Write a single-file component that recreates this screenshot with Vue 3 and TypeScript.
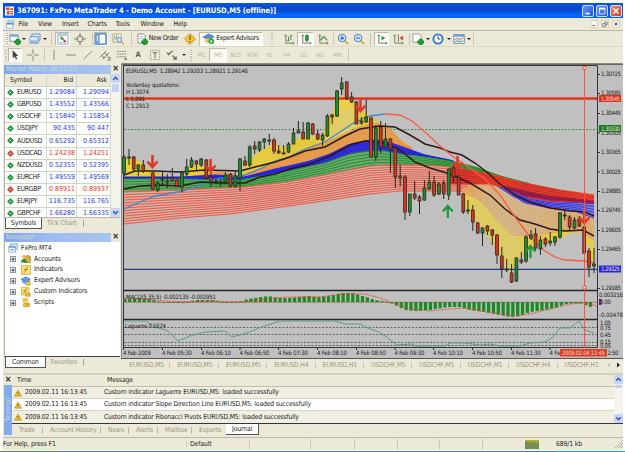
<script setup lang="ts">
type Pt = [number, number]
type Candle = [number, number, number, number, number, 'g' | 'r']

const menus = [['File', 19.5], ['View', 24], ['Insert', 25.5], ['Charts', 28], ['Tools', 25], ['Window', 33], ['Help', 20]] as [string, number][]

const plus = '<path d="M8 6.5h3v2h2v2.500h-2v2H8v-2H6V8.500h2z" fill="#18a028" stroke="#0b6a18" stroke-width=".5"/>'
const glass = '<path d="M8 8l4 4" stroke="#d9a441" stroke-width="2"/><circle cx="5.500" cy="5.500" r="4" fill="#cfe6fb" stroke="#5b8fcb" stroke-width="1.200"/>'
const axes = '<path d="M3 2v9h9M1.500 3.500L3 2l1.500 1.500M10.500 9.500L12 11l-1.500 1.500" fill="none" stroke="#77756a" stroke-width="1"/>'
const icons: Record<string, string> = {
  add: '<path d="M1 2h9v7H1z" fill="#f5f9ff" stroke="#6f93b8"/><path d="M1 2h9v2H1z" fill="#79a7d9"/>' + plus,
  profiles: '<path d="M3 1h9v7H3z" fill="#cfe1f7" stroke="#6f93c8"/><path d="M1 4h9v7H1z" fill="#dfebfa" stroke="#6f93c8"/><path d="M2 8h7v3H2z" fill="#90b3e0"/>',
  market: '<path d="M1 1h11v11H1z" fill="#fff" stroke="#7ea2c9"/><path d="M2 2.500h9M3 10h4" stroke="#9cb4d2"/><path d="M4 4l3 2-2 1z" fill="#1c9a34" stroke="#1c9a34"/><path d="M7 7l3 2-2 1z" fill="#d83a22" stroke="#d83a22"/>',
  target: '<circle cx="6.500" cy="6.500" r="3.500" fill="none" stroke="#77756a"/><path d="M6.500 0v5M6.500 8v5M0 6.500h5M8 6.500h5" stroke="#77756a"/>',
  navi: '<path d="M1 1h11v11H1z" fill="#fff" stroke="#3d79c9" stroke-width="1.500"/><path d="M1 1h4v11H1z" fill="#6aa2e3"/><path d="M2.500 3v6" stroke="#fff"/>',
  tester: '<path d="M1 1h9v9H1z" fill="#f8f4dc" stroke="#b9ab78"/><path d="M3 3v5M5 2v5M7 4v4" stroke="#7a97c9"/><circle cx="8" cy="7.500" r="2.500" fill="#cfe6fb" stroke="#5b8fcb"/><path d="M10 9.500l3 3" stroke="#d9a441" stroke-width="1.500"/>',
  order: '<path d="M2 1h6l2 2v8H2z" fill="#fff" stroke="#8c8c80"/><path d="M3.500 4h4M3.500 6h4" stroke="#a5b8c9"/>' + plus,
  diamond: '<path d="M6.500 .7l5.800 5.800-5.800 5.800L.7 6.500z" fill="#f9c735" stroke="#cc8a14"/><path d="M6.500 3v4.500M6.500 8.700v1.300" stroke="#7c4b00" stroke-width="1.300"/>',
  expert: '<path d="M0 4.500l6-3.500 6 3-5 3z" fill="#4c8fe0" stroke="#2b66b5" stroke-width=".7"/><path d="M3 6v3.500l5 1V6z" fill="#f3cf58" stroke="#b88c1e" stroke-width=".6"/><circle cx="9" cy="9" r="3" fill="#1ca532"/><path d="M8 7.500l3 1.500-3 1.500z" fill="#fff"/>',
  advisor: '<path d="M0 4.500l6-3.500 6 3-5 3z" fill="#5f9fe8" stroke="#2b66b5" stroke-width=".7"/><path d="M2 5.500v3l5 2 4-2V5L7 7.500z" fill="#6ea9ea" stroke="#3d7cc6" stroke-width=".6"/><path d="M7 7.500h5v4.500H7z" fill="#f7c944" stroke="#b88c1e" stroke-width=".7"/>',
  bars: axes + '<path d="M6 9V4M4.500 8H6M8.500 8V2M8.500 3H10" fill="none" stroke="#219034"/>',
  candle: axes + '<path d="M7.500 1v9" stroke="#126a20"/><path d="M6 3h3v5H6z" fill="#25a53b" stroke="#126a20" stroke-width=".7"/>',
  line: axes + '<path d="M4 8c3-6 4-4 7 0" fill="none" stroke="#219034" stroke-width="1.200"/>',
  zoomin: glass + '<path d="M3.500 5.500h4M5.500 3.500v4" stroke="#2167bd" stroke-width="1.200"/>',
  zoomout: glass + '<path d="M3.500 5.500h4" stroke="#2167bd" stroke-width="1.200"/>',
  scroll: axes + '<path d="M6 3v5l4-2.500z" fill="#1fa035"/>',
  shift: axes + '<path d="M7 1.500v8" stroke="#77756a"/><path d="M12 3v5L8 5.500z" fill="#cf4328"/>',
  indic: '<path d="M1 1h7l2 2v7H1z" fill="#fff" stroke="#8c9c9c"/>' + plus,
  clock: '<circle cx="6.500" cy="6.500" r="5" fill="#f4faff" stroke="#2f72cf" stroke-width="2"/><path d="M6.500 3.500v3H9" fill="none" stroke="#345"/>',
  template: '<path d="M.7 1.700h11.600v9.600H.7z" fill="#eaf2fb" stroke="#6f93b8"/><path d="M1 2h11v2H1z" fill="#6ca0de"/><path d="M2 7l3-1 3 1 3-2" fill="none" stroke="#c65b2a"/><path d="M2 9.500l3-1 3 1 3-1" fill="none" stroke="#3b9a46"/>',
  cursor: '<path d="M4 1v9l2-2 1.500 3.500 1.500-.6L7.500 7.500H10z" fill="#45443e"/>',
  cross: '<path d="M6.500 0v5.500M6.500 7.500V13M0 6.500h5.500M7.500 6.500H13" stroke="#858276"/>',
  vline: '<path d="M6.500 1v11" stroke="#858276"/>',
  hline: '<path d="M1 6.500h11" stroke="#858276"/>',
  trend: '<path d="M2 11l9-9" stroke="#858276"/>',
  channel: '<path d="M1 9l7-7M4 11l7-7M3 7l3 3M6 4l3 3" stroke="#66645a"/><path d="M9 9h3v3H9" fill="none" stroke="#66645a"/>',
  fibo: '<path d="M1 2.500h11M1 5.500h11M1 8.500h11" stroke="#858276" stroke-dasharray="2 .7"/><path d="M9 11h3" stroke="#858276" stroke-width="2"/>',
  label: '<path d="M1.500 1.500h10v10h-10z" fill="none" stroke="#858276" stroke-dasharray="1 1"/><path d="M4 4h5M6.500 4v6" stroke="#66645a"/>',
  arrows: '<path d="M1 4l2 2 4-4" fill="none" stroke="#66645a" stroke-width="1.300"/><path d="M7 7l4 4M11 8v3H8" fill="none" stroke="#66645a" stroke-width="1.300"/>',
  accounts: '<path d="M4 3h8v8H4z" fill="#e3b640" stroke="#96761c"/><circle cx="4" cy="3.500" r="2.500" fill="#efb75d"/><path d="M0 11c0-6 8-6 8 0z" fill="#26913a"/><circle cx="9" cy="3" r="2" fill="#d99a3c"/>',
  findic: '<path d="M.7.7h11.600v11.600H.7z" fill="#ffe47a" stroke="#d2a72e"/><path d="M9 3c-2-1-2 1-3 4s-2 3-3 2M4 6h5" fill="none" stroke="#9b6b12"/>',
  custom: '<path d="M.7.7h9.600v9.600H.7z" fill="#ffe47a" stroke="#d2a72e"/><path d="M8 2c-3 0-2 6-5 6M3 5h4" fill="none" stroke="#9b6b12"/><path d="M6 8h6v4H6z" fill="#f2b63c" stroke="#b57f1b" stroke-width=".7"/>',
  script: '<path d="M2 1h7v6H4z" fill="#ffe47a" stroke="#d2a72e"/><path d="M4 7h7v4H3z" fill="#f7ca4b" stroke="#c49527"/><path d="M4 3h3M6 9h4" stroke="#a87b1b"/>',
}

interface Tool { k?: string; w: number; t?: 'grip' | 'caret' | 'sep'; on?: boolean; text?: string; m?: string }
const bar1: Tool[] = [
  { t: 'grip', w: 5 }, { k: 'add', w: 11 }, { t: 'caret', w: 8 }, { k: 'profiles', w: 13 }, { t: 'caret', w: 7 }, { t: 'sep', w: 7 },
  { k: 'market', w: 15, on: true }, { k: 'target', w: 20 }, { t: 'sep', w: 4 }, { k: 'navi', w: 14, on: true }, { k: 'tester', w: 20 }, { t: 'sep', w: 6 },
  { k: 'order', w: 46, text: 'New Order' }, { k: 'diamond', w: 19 }, { k: 'expert', w: 64, on: true, text: 'Expert Advisors' },
  { t: 'grip', w: 17 }, { k: 'bars', w: 17 }, { k: 'candle', w: 17, on: true }, { k: 'line', w: 18 }, { t: 'sep', w: 3 },
  { k: 'zoomin', w: 16 }, { k: 'zoomout', w: 16 }, { t: 'sep', w: 7 }, { k: 'scroll', w: 15, on: true }, { k: 'shift', w: 18 }, { t: 'sep', w: 4 },
  { k: 'indic', w: 13 }, { t: 'caret', w: 7 }, { k: 'clock', w: 14 }, { t: 'caret', w: 7 }, { k: 'template', w: 14 }, { t: 'caret', w: 6 }, { t: 'sep', w: 3 },
]
const bar2: Tool[] = [
  { t: 'grip', w: 4 }, { k: 'cursor', w: 14, on: true }, { k: 'cross', w: 21 }, { t: 'sep', w: 2 }, { k: 'vline', w: 17 }, { k: 'hline', w: 17 },
  { k: 'trend', w: 17 }, { k: 'channel', w: 17 }, { k: 'fibo', w: 17 }, { m: 'A', w: 16 }, { k: 'label', w: 17 }, { k: 'arrows', w: 17 }, { t: 'caret', w: 7 },
  { t: 'grip', w: 7 }, { m: 'M1', w: 15 }, { m: 'M5', w: 18, on: true }, { m: 'M15', w: 17 }, { m: 'M30', w: 17 }, { m: 'H1', w: 17 },
  { m: 'H4', w: 17 }, { m: 'D1', w: 17 }, { m: 'W1', w: 17 }, { m: 'MN', w: 17 }, { t: 'sep', w: 4 },
]

const quotes = [
  ['EURUSD', '1.29084', '1.29094', 'u'], ['GBPUSD', '1.43552', '1.43566', 'u'], ['USDCHF', '1.15840', '1.15854', 'u'],
  ['USDJPY', '90.435', '90.447', 'u'], ['AUDUSD', '0.65292', '0.65312', 'u'], ['USDCAD', '1.24238', '1.24251', 'd'],
  ['NZDUSD', '0.52355', '0.52395', 'u'], ['EURCHF', '1.49559', '1.49569', 'u'], ['EURGBP', '0.89911', '0.89937', 'd'],
  ['EURJPY', '116.735', '116.765', 'u'], ['GBPCHF', '1.66280', '1.66335', 'u'],
]
const tree = [['accounts', 'Accounts'], ['findic', 'Indicators'], ['advisor', 'Expert Advisors'], ['custom', 'Custom Indicators'], ['script', 'Scripts']]
const chartTabs = ['EURUSD,M5', 'EURUSD,M5', 'EURUSD,M5', 'EURUSD,H4', 'EURUSD,H1', 'USDCHF,M5', 'USDCHF,M5', 'USDCHF,M1', 'USDCHF,H4', 'USDCHF,H1']
const journal = ['Laguerre', 'Slope Direction Line', 'Fibonacci Pivots'].map(n => `Custom indicator ${n} EURUSD,M5: loaded successfully`)
const termTabs = [['Trade', 31], ['Account History', 58], ['News', 28], ['Alerts', 29], ['Mailbox', 34], ['Experts', 35]] as [string, number][]

const at = (k: Pt[], x: number): number => {
  if (x <= k[0][0]) return k[0][1]
  for (let i = 1; i < k.length; i++) {
    if (x <= k[i][0]) {
      const [x0, y0] = k[i - 1], [x1, y1] = k[i]
      return y0 + ((y1 - y0) * (x - x0)) / (x1 - x0)
    }
  }
  return k[k.length - 1][1]
}
const pts = (k: Pt[]) => k.map(p => p.join(',')).join(' ')

interface Band { x0: number; x1: number; top: Pt[]; bot: Pt[]; base: string; line: string; n: number }
const orangeTop: Pt[] = [[124, 176], [183, 177], [205, 175], [215, 172], [245, 175], [262, 168], [289, 156], [325, 143], [345, 134], [360, 127], [375, 123], [388, 127], [403, 143], [412, 148]]
const blueTop: Pt[] = [[124, 177], [183, 177], [215, 175], [245, 177], [260, 173], [275, 169], [289, 166], [310, 161], [330, 154], [350, 144], [370, 140], [385, 141], [400, 146], [425, 155], [450, 160], [455, 162]]
const greenTop: Pt[] = [[124, 179], [183, 179], [240, 180], [262, 176], [289, 171], [325, 163], [350, 154], [370, 151], [385, 151], [400, 154], [425, 157], [450, 161], [475, 167], [500, 176], [530, 184]]
const redTop: Pt[] = [[124, 192], [183, 190], [245, 187], [289, 182], [330, 174], [370, 166], [400, 165], [440, 166], [455, 168], [485, 173], [520, 182], [560, 190], [594, 195]]
const bands: Band[] = [
  { x0: 124, x1: 180, top: [[124, 163], [129, 158], [140, 162], [150, 171], [165, 176], [180, 177]], bot: [[124, 177], [180, 177]], base: '#edd83c', line: '#e8c624', n: 6 },
  { x0: 184, x1: 240, top: [[184, 176], [190, 167], [200, 164], [206, 170], [215, 174], [240, 178]], bot: [[184, 177], [240, 178]], base: '#edd83c', line: '#e8c624', n: 5 },
  { x0: 240, x1: 412, top: [[240, 176], [250, 160], [262, 150], [272, 145], [289, 148], [300, 137], [322, 137], [332, 113], [340, 96], [350, 98], [357, 108], [370, 116], [385, 129], [400, 140], [412, 148]], bot: [[240, 178], [262, 167], [289, 157], [325, 144], [355, 127], [375, 124], [390, 136], [412, 149]], base: '#efd64a', line: '#e3c83a', n: 13 },
  { x0: 318, x1: 356, top: [[318, 143], [338, 116], [351, 106], [356, 110]], bot: [[318, 146], [335, 138], [356, 126]], base: '#d9cd9b', line: '#e6cd51', n: 14 },
  { x0: 245, x1: 412, top: orangeTop, bot: blueTop, base: '#d8a45c', line: '#ee963c', n: 7 },
  { x0: 190, x1: 235, top: orangeTop, bot: blueTop, base: '#e5a44e', line: '#ee963c', n: 2 },
  { x0: 124, x1: 455, top: blueTop, bot: greenTop, base: '#3934cf', line: '#2320e8', n: 4 },
  { x0: 124, x1: 530, top: greenTop, bot: redTop, base: '#6ea872', line: '#22912a', n: 5 },
  { x0: 124, x1: 520, top: redTop, bot: [[124, 224], [180, 218], [230, 214], [289, 206], [330, 200], [370, 194], [400, 191], [455, 191], [490, 194], [520, 198]], base: '#c8b8a8', line: '#fb5146', n: 12 },
  { x0: 462, x1: 594, top: [[462, 192], [478, 194], [498, 212], [515, 226], [535, 233], [555, 230], [575, 229], [594, 237]], bot: [[462, 202], [470, 214], [485, 231], [496, 248], [510, 273], [520, 255], [535, 246], [555, 240], [573, 232], [584, 232], [594, 264]], base: '#d6cb80', line: '#e8cf3c', n: 13 },
  { x0: 462, x1: 594, top: [[462, 190], [480, 180], [500, 188], [520, 203], [550, 209], [575, 213], [594, 218]], bot: [[462, 192], [480, 200], [497, 220], [512, 235], [535, 236], [555, 232], [580, 231], [594, 240]], base: '#cbbd9c', line: '#e6a35c', n: 12 },
  { x0: 488, x1: 594, top: [[488, 177], [505, 183], [525, 196], [550, 200], [594, 201]], bot: [[488, 180], [505, 191], [525, 203], [550, 208], [575, 211], [594, 218]], base: '#8583c5', line: '#3533e8', n: 6 },
  { x0: 450, x1: 594, top: redTop, bot: [[450, 184], [470, 184], [490, 184], [510, 189], [530, 198], [550, 201], [594, 202]], base: '#bb2b28', line: '#f0412c', n: 6 },
  { x0: 505, x1: 594, top: [[505, 186], [525, 191], [550, 196], [594, 201]], bot: [[505, 188], [525, 196], [550, 200], [594, 203]], base: '#8c1c50', line: '#b02238', n: 1 },
]
const step = 4
const bandShapes = bands.map(b => {
  const xs: number[] = []
  for (let x = b.x0; x < b.x1; x += step) xs.push(x)
  xs.push(b.x1)
  const row = (f: number): Pt[] => xs.map(x => [x, +(at(b.top, x) * (1 - f) + at(b.bot, x) * f).toFixed(2)])
  return {
    base: b.base,
    line: b.line,
    area: pts([...row(0), ...row(1).reverse()]),
    lines: Array.from({ length: b.n + 1 }, (_, i) => pts(row(i / b.n))),
  }
})

const maFast = pts([[124, 209], [135, 204], [155, 196], [183, 191], [205, 183], [215, 179], [245, 175], [262, 168], [275, 161], [289, 157], [305, 149], [325, 142], [340, 132], [355, 122], [370, 116], [385, 114]])
const maFall = pts([[385, 114], [400, 115], [412, 121], [425, 132], [440, 146], [455, 158], [470, 168], [485, 179], [500, 195], [515, 217], [530, 237], [545, 251], [555, 257], [565, 260], [585, 261], [594, 263]])
const maBlackA = pts([[124, 175], [135, 171], [155, 171], [180, 172], [205, 170], [240, 171], [255, 167], [275, 162], [290, 157], [305, 151], [325, 147], [345, 136], [360, 129], [380, 126], [395, 127], [410, 135], [425, 144], [440, 148], [450, 152], [462, 155], [475, 163], [488, 173], [500, 184], [515, 195], [530, 202], [550, 208], [570, 211], [585, 212], [594, 216]])
const maBlackB = pts([[124, 189], [140, 186], [160, 185], [180, 186], [200, 182], [220, 183], [245, 183], [260, 177], [275, 174], [290, 169], [310, 164], [330, 156], [350, 145], [365, 141], [385, 143], [400, 150], [415, 162], [430, 168], [450, 174], [470, 183], [490, 195], [505, 209], [520, 220], [535, 224], [550, 229], [565, 231], [583, 230], [594, 236]])

const candles: Candle[] = [
  [124, 155, 175, 157, 173, 'g'], [129, 149, 165, 157, 158, 'g'], [133.700, 156, 172, 157, 169, 'r'], [138.300, 164, 176, 165, 169, 'g'], [143.300, 160, 173, 165, 171, 'r'],
  [152.700, 172, 190, 173, 189, 'r'], [157.700, 181, 192, 183, 190, 'g'], [162.500, 172, 186, 179, 180, 'g'], [167.300, 174, 188, 181, 182, 'g'], [172.300, 168, 182, 178, 181, 'r'],
  [177, 179, 187, 180, 186, 'r'], [182, 172, 192, 173, 187, 'g'], [186.700, 159, 177, 167, 174, 'g'], [191.500, 157, 168, 160, 167, 'g'], [196.400, 160, 170, 161, 164, 'r'],
  [201.200, 158, 167, 159, 165, 'g'], [206.300, 159, 180, 160, 178, 'r'], [211, 169, 187, 177, 181, 'r'], [216, 178, 184, 181, 182, 'g'], [220.500, 179, 186, 182, 183, 'g'],
  [225.400, 172, 184, 175, 182, 'g'], [230.400, 173, 188, 174, 186, 'r'], [235.300, 171, 188, 176, 186, 'g'], [240, 158, 191, 159, 178, 'g'], [245, 156, 166, 161, 165, 'r'],
  [249.700, 145, 167, 147, 165, 'g'], [254.700, 141, 154, 146, 149, 'r'], [259.500, 141, 152, 142, 150, 'g'], [264.300, 138, 149, 139, 142, 'g'], [269.300, 134, 145, 140, 141, 'g'],
  [274, 138, 154, 140, 151, 'r'], [278.700, 145, 154, 151, 153, 'r'], [283.700, 145, 154, 153, 154, 'g'], [288.500, 142, 153, 144, 152, 'g'],
  [293.500, 128, 144, 133, 144, 'g'], [298.400, 121, 133, 131, 133, 'g'], [303.200, 122, 139, 132, 139, 'r'], [308, 122, 139, 123, 139, 'g'], [312.700, 123, 135, 124, 134, 'r'],
  [317.700, 130, 140, 134, 139, 'r'], [322.600, 133, 146, 135, 140, 'g'], [327.400, 114, 137, 116, 136, 'g'], [332.200, 114, 124, 115, 117, 'r'], [337, 90, 117, 91, 116, 'g'],
  [341.700, 77, 95, 83, 89, 'g'], [346.700, 81, 100, 82, 98, 'r'], [351.600, 92, 103, 97, 102, 'r'], [356.400, 101, 124, 102, 124, 'r'], [361.400, 117, 125, 121, 123, 'g'],
  [366.200, 99, 123, 117, 122, 'g'], [371, 117, 157, 118, 157, 'r'], [375.800, 125, 161, 128, 157, 'g'], [380.700, 121, 153, 127, 147, 'r'], [385.500, 123, 148, 139, 147, 'g'],
  [390.400, 138, 173, 139, 149, 'r'], [395.300, 148, 188, 148, 177, 'r'], [400.200, 165, 186, 176, 178, 'r'], [405, 175, 220, 177, 212, 'r'], [409.800, 194, 216, 194, 212, 'g'],
  [414.700, 181, 200, 194, 198, 'r'], [419.500, 195, 214, 197, 201, 'r'], [424.400, 180, 201, 188, 200, 'g'], [429.300, 171, 190, 182, 189, 'g'], [434.100, 176, 197, 182, 195, 'r'],
  [438.900, 182, 195, 184, 194, 'g'], [443.700, 180, 199, 183, 194, 'r'], [448.700, 168, 200, 169, 195, 'g'], [453.500, 166, 183, 168, 177, 'r'], [458.600, 175, 195, 177, 195, 'r'],
  [463.300, 193, 214, 194, 212, 'r'], [468, 200, 214, 210, 211, 'g'], [472.800, 205, 231, 210, 222, 'r'], [477.700, 222, 234, 223, 233, 'r'], [482.500, 227, 246, 228, 233, 'g'],
  [487.400, 225, 235, 226, 231, 'r'], [492.300, 229, 245, 230, 235, 'r'], [497, 234, 264, 235, 255, 'r'], [501.800, 247, 278, 256, 269, 'r'], [506.700, 259, 272, 269, 270, 'g'],
  [511.600, 264, 283, 273, 282, 'r'], [516.400, 257, 282, 258, 281, 'g'], [521.300, 252, 264, 260, 262, 'r'], [526, 235, 263, 237, 261, 'g'], [531, 230, 240, 235, 238, 'g'],
  [535.600, 228, 251, 234, 248, 'r'], [540.400, 236, 255, 240, 249, 'g'], [545.400, 237, 247, 239, 244, 'r'], [550.200, 232, 246, 241, 243, 'g'], [555, 236, 246, 237, 242, 'g'],
  [560, 212, 239, 213, 237, 'g'], [564.800, 210, 220, 215, 216, 'g'], [569.600, 215, 230, 217, 227, 'r'], [574.500, 217, 229, 220, 228, 'g'], [579.300, 216, 227, 219, 226, 'r'],
  [584.200, 226, 254, 227, 253, 'r'], [589, 248, 277, 251, 267, 'r'], [594, 248, 273, 264, 266, 'g'],
]
const downArrows: Pt[] = [[152.500, 168], [210.500, 172], [360.500, 112], [457.500, 169], [584.300, 224]]
const upArrows: Pt[] = [[447.800, 205], [530.500, 245]]

const macdKeys: Pt[] = [[124, 3], [150, 3], [160, 0], [185, -1], [195, 2], [212, 2], [222, 0], [238, 0], [248, 3], [268, 6], [278, 4], [290, 4], [308, 6], [318, 5], [330, 6], [342, 9], [352, 9], [366, 5], [375, 2], [388, 0], [395, -3], [405, -8], [415, -9], [430, -8], [448, -5], [460, -5], [470, -8], [485, -10], [500, -13], [510, -15], [520, -14], [530, -10], [545, -8], [555, -6], [565, -2], [580, -1], [588, -4], [594, -6]]
const macdBars = Array.from({ length: 97 }, (_, i) => {
  const x = 124.700 + i * 4.850
  const v = at(macdKeys, x)
  return { x: x - 1.500, y: v >= 0 ? 302 - v : 302, h: Math.max(Math.abs(v), 0.8) }
})
const macdSignal = pts([[124, 298], [145, 299], [165, 301], [195, 302], [215, 301], [245, 302], [260, 300], [285, 297], [320, 297], [340, 294], [365, 294], [380, 298], [395, 304], [410, 309], [430, 311], [450, 309], [465, 308], [480, 311], [500, 314], [515, 316], [530, 314], [550, 309], [570, 304], [585, 303], [597, 306]])
const laguerre = pts([[124, 321], [146, 321], [155, 327], [168, 331], [178, 341], [190, 336], [205, 332], [225, 331], [232, 337], [247, 333], [262, 327], [280, 321], [335, 321], [345, 324], [360, 324], [370, 329], [379, 332], [388, 338], [397, 345], [412, 344], [415, 346], [445, 346], [450, 343], [465, 343], [480, 345], [490, 344], [500, 346], [520, 346], [530, 343], [545, 342], [552, 338], [560, 328], [570, 328], [579, 321], [585, 330], [594, 333]])
const levels = [327.500, 334.500, 342.500, 345.500]

const prices: [string, number][] = [['1.30725', 74], ['1.30585', 93], ['1.30445', 113], ['1.30305', 132.500], ['1.30165', 152], ['1.30025', 171.500], ['1.29885', 191], ['1.29745', 210], ['1.29605', 230], ['1.29465', 249], ['1.29185', 288]]
const tags: [string, number, string][] = [['1.30545', 98.500, '#d9351d'], ['1.30330', 128.500, '#187a22'], ['1.29325', 269, '#2227d8']]
const times: [string, number, number][] = [['4 Feb 2009', 123, 28], ['4 Feb 05:30', 162, 30], ['4 Feb 06:10', 201, 30], ['4 Feb 06:50', 239.500, 30], ['4 Feb 07:30', 278, 30], ['4 Feb 08:10', 317, 30], ['4 Feb 08:50', 356, 30], ['4 Feb 09:30', 394.500, 30], ['4 Feb 10:10', 433, 30], ['4 Feb 10:50', 472, 30], ['4 Feb 11:30', 511, 30], ['4 Fe', 549.500, 11]]
</script>

<template>
  <div class="screen">
    <header class="title">
      <svg class="logo" viewBox="0 0 10 10"><path d="M0 0h10v10H0z" fill="#fff" /><path d="M1 1h4v3H1zM2 5h3v4H2zM6 2h3v2H6zM6 5h3v1H6zM6 7h3v2H6z" fill="#d8492e" /></svg>
      <span class="caption">367091: FxPro MetaTrader 4 - Demo Account - [EURUSD,M5 (offline)]</span>
      <div class="winbtns">
        <i class="wb"><svg viewBox="0 0 12 12"><path d="M3 9h5" stroke="#fff" stroke-width="2" /></svg></i>
        <i class="wb"><svg viewBox="0 0 12 12"><path d="M3 3.500h6.500v6H3z" fill="none" stroke="#fff" /><path d="M2.500 3h7.500" stroke="#fff" stroke-width="2" /></svg></i>
        <i class="wb close"><svg viewBox="0 0 12 12"><path d="M3 3l6 6M9 3l-6 6" stroke="#fff" stroke-width="1.600" /></svg></i>
      </div>
    </header>

    <nav class="menu">
      <svg class="docicon" viewBox="0 0 12 12"><path d="M3 1h7v6H3z" fill="#dcebff" stroke="#7fa6dc" /><path d="M1 4h8v7H1z" fill="#fff" stroke="#7fa6dc" /><path d="M1 5h8" stroke="#4f8ae0" stroke-width="2" /></svg>
      <span v-for="m in menus" :key="m[0]" :style="{ width: m[1] + 'px' }">{{ m[0] }}</span>
      <div class="mdi">
        <svg viewBox="0 0 8 8"><path d="M2 6h3" stroke="#444" stroke-width="1.200" /></svg>
        <svg viewBox="0 0 8 8"><path d="M3 1.500h4V5H5.500M1 3.500h4V7H1z" fill="none" stroke="#555" /></svg>
        <svg viewBox="0 0 8 8"><path d="M2 2l4 4M6 2L2 6" stroke="#444" stroke-width="1.300" /></svg>
      </div>
    </nav>

    <div v-for="(bar, bi) in [bar1, bar2]" :key="bi" class="toolbar">
      <div v-for="(t, i) in bar" :key="i" class="tool" :class="[t.t, { on: t.on }]" :style="{ width: t.w + 'px' }">
        <svg v-if="t.k" viewBox="0 0 13 13" v-html="icons[t.k]"></svg>
        <span v-if="t.text" class="tt">{{ t.text }}</span>
        <span v-if="t.m" class="per" :class="{ letter: t.m === 'A' }">{{ t.m }}</span>
      </div>
    </div>

    <main class="work">
      <aside class="side">
        <section class="pane watch">
          <div class="phead">Market Watch: 18:22:55<b>×</b></div>
          <div class="wbody">
            <div class="rows">
              <div class="qr qh"><span>Symbol</span><span>Bid</span><span>Ask</span></div>
              <div v-for="q in quotes" :key="q[0]" class="qr" :class="q[3]">
                <span class="sym"><svg viewBox="0 0 8 8"><path d="M4 .5L7.500 4 4 7.500.5 4z" /><path class="hl" d="M3 4h2" /></svg>{{ q[0] }}</span><span>{{ q[1] }}</span><span>{{ q[2] }}</span>
              </div>
            </div>
            <div class="scroll"><i><svg viewBox="0 0 6 6"><path d="M1 4l2-2 2 2" /></svg></i><em></em><u></u><i><svg viewBox="0 0 6 6"><path d="M1 2l2 2 2-2" /></svg></i></div>
          </div>
          <div class="ptabs"><span class="act">Symbols</span><span class="off">Tick Chart</span><s></s></div>
        </section>
        <section class="pane nav">
          <div class="phead">Navigator<b>×</b></div>
          <div class="tree">
            <div class="node root"><svg viewBox="0 0 12 12"><path d="M3 1h8v7H3z" fill="#dcebff" stroke="#74a4d8" /><path d="M1 4h8v7H1z" fill="#fff" stroke="#74a4d8" /><path d="M1 5h8M3 8h4" stroke="#5d9be0" stroke-width="1.500" /></svg>FxPro MT4</div>
            <div v-for="n in tree" :key="n[1]" class="node"><i class="exp">+</i><svg viewBox="0 0 13 13" v-html="icons[n[0]]"></svg>{{ n[1] }}</div>
          </div>
          <div class="ptabs"><span class="act">Common</span><span class="off">Favorites</span><s></s></div>
        </section>
      </aside>

      <section class="center">
        <svg class="chart" viewBox="121 63 502 295">
          <path d="M121 63H623V358H121z" fill="#c0c0c0" />
          <path d="M121.500 358V63.500H623" fill="none" stroke="#8c8a80" />
          <path d="M123 65.500H597.500V347.500H123.500V65" fill="none" stroke="#34363a" />
          <path d="M122 64.500H623" stroke="#6c6a62" />
          <path d="M124 129.500H597" stroke="#2f7a3a" stroke-width=".8" stroke-dasharray="2 1.500" />
          <g v-for="(b, i) in bandShapes" :key="'b' + i">
            <polygon :points="b.area" :fill="b.base" />
            <polyline v-for="(l, j) in b.lines" :key="j" :points="l" fill="none" :stroke="b.line" stroke-width="1" />
          </g>
          <path d="M124 269.500H597" stroke="#2430a8" />
          <path d="M124 268.800H597" stroke="#3a7a48" stroke-width=".5" />
          <polyline :points="maFast" fill="none" stroke="#3f86d8" stroke-width="1.300" />
          <polyline :points="maBlackA" fill="none" stroke="#2d1a18" stroke-width="1.500" />
          <polyline :points="maBlackB" fill="none" stroke="#2d1a18" stroke-width="1.500" />
          <polyline :points="maFall" fill="none" stroke="#fa5a44" stroke-width="1.300" />
          <path d="M124 98.500H597" stroke="#d9351d" stroke-width="2.400" />
          <path d="M124 97.600H597" stroke="#f0604a" stroke-width=".6" />
          <g v-for="(c, i) in candles" :key="'c' + i">
            <path :d="`M${c[0]} ${c[1]}V${c[2]}`" stroke="#26261e" stroke-width="1" />
            <rect :x="c[0] - 1.400" :y="c[3]" width="2.800" :height="c[4] - c[3]" :fill="c[5] === 'g' ? '#1d8d2c' : '#d83420'" stroke="#2b2a20" stroke-width=".8" />
          </g>
          <path v-for="(a, i) in downArrows" :key="'d' + i" :d="`M${a[0]} ${a[1] - 13}v10M${a[0] - 5} ${a[1] - 6.500}l5 5.500l5-5.500`" fill="none" stroke="#dc3a22" stroke-width="2.600" />
          <path v-for="(a, i) in upArrows" :key="'u' + i" :d="`M${a[0]} ${a[1] + 13}v-10M${a[0] - 5} ${a[1] + 6.500}l5-5.500l5 5.500`" fill="none" stroke="#22983a" stroke-width="2.300" />
          <path d="M584.500 67V347" stroke="#fa5340" />
          <path d="M583 66.500h3v3h-3zM583 286h3v3h-3z" fill="#f4dcd4" stroke="#e8452e" stroke-width=".8" />

          <path d="M123 290.500H597M123 319.500H597" stroke="#24262b" stroke-width="1.600" />
          <path d="M124 302.300H597" stroke="#b58c74" stroke-width="1.200" />
          <rect v-for="(m, i) in macdBars" :key="'m' + i" :x="m.x" :y="m.y" width="3.300" :height="m.h" fill="#1e8a26" />
          <polyline :points="macdSignal" fill="none" stroke="#f0442c" stroke-width=".9" stroke-dasharray="2 1" />
          <path v-for="l in levels" :key="l" :d="`M124 ${l}H597`" stroke="#595a58" stroke-width=".9" stroke-dasharray="2 1.600" />
          <polyline :points="laguerre" fill="none" stroke="#5d9c8c" stroke-width="1" />
          <path d="M584.500 290V348" stroke="#fa5340" />

          <g class="ct">
            <text x="126" y="72.700" textLength="122">EURUSD,M5&#160; 1.28942 1.29203 1.28921 1.29146</text>
            <text x="126" y="86.500" textLength="54">Yesterday quotations:</text>
            <text x="126" y="93.500" textLength="23">H 1.3074</text>
            <text x="126" y="100.500" textLength="19">L 1.291</text>
            <text x="126" y="108" textLength="23">C 1.2913</text>
            <text x="126" y="299" textLength="90">MACD(5,35,5) -0.002135 -0.002951</text>
            <text x="125" y="328" textLength="41">Laguerre 0.1674</text>
            <g v-for="p in prices" :key="p[0]">
              <path :d="`M597 ${p[1] + .5}h3`" stroke="#333" />
              <text x="601" :y="p[1] + 2.200" textLength="20">{{ p[0] }}</text>
            </g>
            <text x="599" y="297" textLength="24">0.003216</text>
            <path d="M599 299h2.500v6H599z" fill="#6a1c94" />
            <text x="600" y="304" textLength="11">0.00</text>
            <text x="599" y="317" textLength="24">-0.00478</text>
            <text x="600" y="325" textLength="11">1.05</text>
            <text x="600" y="329.500" textLength="11">0.75</text>
            <text x="600" y="336.500" textLength="11">0.45</text>
            <text x="600" y="343.500" textLength="11">0.15</text>
            <text x="600" y="347.500" textLength="11">0.05</text>
            <g v-for="t in times" :key="t[0]">
              <path :d="`M${t[1] + .5} 347v3`" stroke="#333" />
              <text :x="t[1]" y="354.700" :textLength="t[2]">{{ t[0] }}</text>
            </g>
            <text x="607.500" y="354.700" textLength="11">2:50</text>
          </g>
          <g class="ct light">
            <g v-for="g in tags" :key="g[0]">
              <rect x="599" :y="g[1] - 3.500" width="22" height="7" :fill="g[2]" />
              <text x="601" :y="g[1] + 2.200" textLength="19">{{ g[0] }}</text>
            </g>
            <rect x="560" y="349" width="47" height="7.500" fill="#e23a22" />
            <text x="562" y="354.700" textLength="43">2009.02.04 12:45</text>
          </g>
        </svg>
        <div class="ctabs">
          <span v-for="(c, i) in chartTabs" :key="i">{{ c }}</span>
          <svg viewBox="0 0 14 8"><path d="M3 2v4L1 4z" fill="#b4b09c" /><path d="M10 1.500v5L13 4z" fill="#222" /></svg>
        </div>
      </section>
    </main>

    <section class="terminal">
      <div class="tbar"><b>×</b><div><span>Terminal</span></div></div>
      <div class="tmain">
        <div class="ttable">
          <div class="tlist">
            <div class="tr th"><span class="ti">Time</span><span>Message</span></div>
            <div v-for="(j, i) in journal" :key="i" class="tr" :class="{ white: i === 1 }">
              <span class="ti"><svg viewBox="0 0 10 9"><path d="M5 .7L9.500 8.500H.5z" fill="#f4c530" stroke="#a88a20" stroke-width=".8" /><path d="M5 3.200v2.600M5 6.500v1" stroke="#5c4a10" /></svg>2009.02.11 16:13:45</span><span class="ms">{{ j }}</span>
            </div>
          </div>
          <div class="scroll"><i><svg viewBox="0 0 6 6"><path d="M1 4l2-2 2 2" /></svg></i><em></em><u></u><i><svg viewBox="0 0 6 6"><path d="M1 2l2 2 2-2" /></svg></i></div>
        </div>
        <div class="ttabs"><span v-for="t in termTabs" :key="t[0]" :style="{ width: t[1] + 'px' }">{{ t[0] }}</span><span class="act">Journal</span></div>
      </div>
    </section>

    <footer class="status">
      <span class="help">For Help, press F1</span><span class="def">Default</span><i class="w61"></i><i class="w44"></i><i></i><i></i><i></i><i class="w39"></i>
      <svg viewBox="0 0 14 9"><path d="M0 0h14v9H0z" fill="#26507c" /><path d="M1 9V3M3 9V3M5 9V2M7 9V2M9 9V1M11 9V1M13 9V0" stroke="#c5cf38" stroke-width="1" /><path d="M0 0h14v2.500H0z" fill="#b3a72c" /></svg>
      <span class="kb">689/1 kb</span>
      <svg class="gripc" viewBox="0 0 8 8"><path d="M0 8l8-8M3 8l5-5M6 8l2-2" stroke="#b2ae98" /></svg>
    </footer>
    <div class="task"><i></i><u></u><b></b></div>
  </div>
</template>

<style>
html, body { margin: 0; background: #fff; overflow: hidden; }
</style>

<style scoped>
* { box-sizing: border-box; }
.screen { width: 625px; height: 452px; padding: 3px 2px 0 3px; background: #fff; display: flex; flex-direction: column; font: 6.800px/1 "DejaVu Sans Condensed", "DejaVu Sans", "Noto Sans", sans-serif; letter-spacing: -.13px; color: #1c1c1a; overflow: hidden; white-space: nowrap; }
svg { display: block; flex: none; }
i, em, u, s { font-style: normal; text-decoration: none; }

.title { height: 15px; flex: none; display: flex; align-items: center; padding: 0 1px 0 2px; background: linear-gradient(#0a58e0, #0648cf 35%, #0654dc 60%, #0866ff 80%, #0762f4); color: #fff; font: bold 7.600px/1 "DejaVu Sans Condensed", sans-serif; letter-spacing: -.1px; }
.logo { width: 9px; height: 10px; }
.caption { margin-left: 3px; }
.winbtns { margin-left: auto; display: flex; gap: 2px; }
.wb { width: 12px; height: 12px; border: .5px solid #cfe0ff; border-radius: 2px; background: linear-gradient(135deg, #6593f5, #1f57d8); display: flex; }
.wb svg { width: 100%; height: 100%; }
.close { background: linear-gradient(135deg, #f08c70, #d43a18); }

.menu { height: 13px; flex: none; display: flex; align-items: center; background: #ece9d8; border-bottom: 1px solid #b9b6a6; padding: 0 3px; }
.docicon { width: 9px; height: 9px; margin-right: 3.500px; }
.mdi { margin-left: auto; display: flex; gap: 3px; }
.mdi svg { width: 8px; height: 8px; background: #f8f7f0; border: .5px solid #d6d2c0; }

.toolbar { height: 16px; flex: none; display: flex; align-items: center; background: #ece9d8; padding-left: 1px; }
.toolbar:nth-of-type(1) { border-bottom: 1px solid #dcd8c6; }
.tool { height: 14px; flex: none; display: flex; align-items: center; justify-content: center; }
.tool svg { width: 12px; height: 12px; }
.tool.on { background: #faf9f4; border: 1px solid #bdb9a8; border-right-color: #fff; border-bottom-color: #fff; }
.tool .tt { margin-left: 1px; letter-spacing: -.35px; }
.tool.grip::before { content: ""; width: 2px; height: 11px; background: repeating-linear-gradient(#bbb7a4 0 1px, #f7f5ea 1px 2px); }
.tool.sep::before { content: ""; width: 1px; height: 12px; background: #c9c5b2; }
.tool.caret::before { content: ""; border: 2px solid transparent; border-top-color: #222; border-bottom: 0; }
.per { color: #b8b4a0; font-size: 6px; }
.per.letter { color: #5e5c52; font-size: 7.500px; font-weight: bold; }

.work { height: 310px; flex: none; display: flex; background: #ece9d8; }
.side { width: 118px; flex: none; padding: 2px 1px 0 1px; display: flex; flex-direction: column; gap: 4px; }
.pane { display: flex; flex-direction: column; flex: none; }
.phead { height: 9px; flex: none; display: flex; align-items: center; justify-content: space-between; background: linear-gradient(90deg, #80a8ea, #9dbcf0 40%, #a9c4ee); color: #d0d6d0; padding-left: 2px; }
.phead b { width: 9px; height: 9px; background: #ece9d8; color: #222; text-align: center; font: bold 8px/8px "DejaVu Sans", sans-serif; }
.watch { height: 164px; }
.wbody { display: flex; height: 144px; overflow: hidden; background: #fff; border: 1px solid #bcb8a4; border-width: 0 0 1px 1px; }
.rows { flex: 1; display: flex; flex-direction: column; }
.qr { height: 12.120px; flex: none; display: grid; grid-template-columns: 42px 30px 1fr; border-bottom: 1px solid #c9d9bb; color: #2538dc; font-size: 6.900px; letter-spacing: .05px; }
.qr span { border-right: 1px solid #cfddc4; text-align: right; padding-right: 1px; display: flex; align-items: center; justify-content: flex-end; }
.qr.d { color: #ee3320; }
.qr .sym { justify-content: flex-start; color: #1c1c1a; letter-spacing: -.3px; }
.sym svg { width: 7px; height: 7px; margin: 0 3px 0 2px; fill: #1ca338; stroke: #0c6b1f; stroke-width: .6; }
.d .sym svg { fill: #e2472f; stroke: #8c2010; }
.sym svg .hl { stroke: #fff; stroke-width: .8; }
.qr.qh { background: #ece9d8; color: #1c1c1a; height: 13px; font-size: 6.800px; letter-spacing: -.1px; }
.qh span:first-child { justify-content: flex-start; padding-left: 5px; }
.qh span { padding-right: 3px; }
.scroll { width: 9px; display: flex; flex-direction: column; background: #f4f3ec; flex: none; }
.scroll i { height: 9px; background: #c8d6f8; border-radius: 1px; display: flex; align-items: center; justify-content: center; }
.scroll i svg { width: 7px; height: 7px; fill: none; stroke: #3b55a8; stroke-width: 1.300; }
.scroll em { height: 8px; margin: 1px; background: #c3d2f2; }
.scroll u { flex: 1; }
.ptabs { height: 11px; display: flex; align-items: center; background: #ece9d8; }
.ptabs .act { height: 11px; margin-left: 1px; padding: 0 5px; display: flex; align-items: center; background: #fff; border: 1px solid #555; border-top: 0; }
.ptabs .off { color: #9c9882; margin-left: 5px; }
.ptabs s { width: 1px; height: 7px; background: #aaa690; margin-left: 6px; }
.tree { height: 115px; background: #fff; border-left: 1px solid #bcb8a4; border-bottom: 1px solid #444; padding: 1px 0 0 3px; }
.node { height: 10.900px; display: flex; align-items: center; padding-left: 2px; }
.node svg { width: 10px; height: 10px; margin: 0 3.500px 0 4.500px; }
.node.root { padding: 0; height: 10.500px; }
.root svg { margin: 0 3px 0 0; }
.exp { width: 6px; height: 6px; border: .6px solid #8a98a8; display: flex; align-items: center; justify-content: center; font: bold 6px/5px "DejaVu Sans", sans-serif; letter-spacing: 0; }
.nav .act { padding: 0 6px; }

.center { width: 502px; flex: none; display: flex; flex-direction: column; }
.chart { width: 502px; height: 295px; letter-spacing: 0; }
.ct { font: 6px "DejaVu Sans Condensed", "DejaVu Sans", sans-serif; fill: #1b1b1b; }
.light { fill: #f6d9cf; }
.ctabs { height: 13px; border-top: 1px solid #555; display: flex; align-items: center; color: #9c9882; }
.ctabs span { width: 48.400px; padding-left: 7px; border-left: 1px solid #c9c5b2; flex: none; letter-spacing: -.2px; }
.ctabs span:first-child { border: 0; padding-left: 8px; }
.ctabs svg { width: 14px; height: 8px; margin-left: 2px; }

.terminal { height: 64px; flex: none; display: flex; background: #ece9d8; border-top: 2px solid #d4d0bc; }
.tbar { width: 9px; display: flex; flex-direction: column; padding-left: 1px; }
.tbar b { height: 10px; font: bold 8px/9px "DejaVu Sans", sans-serif; text-align: center; }
.tbar div { height: 50px; background: #86abea; color: #c7d3e8; overflow: hidden; display: flex; justify-content: center; align-items: center; }
.tbar div span { writing-mode: vertical-rl; transform: rotate(180deg); font-size: 6.500px; }
.tmain { flex: 1; display: flex; flex-direction: column; }
.ttable { height: 49px; display: flex; border-bottom: 1px solid #334; }
.tlist { flex: 1; }
.tr { height: 12px; display: flex; align-items: center; border-bottom: 1px solid #d8d4c2; background: #f1eee2; }
.tr:last-child { border-bottom: 0; }
.tr.white { background: #fff; }
.th { background: #ece9d8; border-bottom: 1px solid #c2bea9; }
.th .ti { padding-left: 5px; }
.tr .ti { width: 92px; display: flex; align-items: center; }
.ms { letter-spacing: -.16px; }
.tr:not(.th) .ti svg { width: 8px; height: 8px; margin: 0 3px 0 2px; }
.th span:last-child { padding-left: 3px; }
.ttable .scroll em { height: 3px; }
.ttabs { height: 12px; display: flex; align-items: center; color: #9c9882; }
.ttabs span { padding-left: 7px; border-right: 1px solid #bbb7a2; height: 7px; line-height: 7px; flex: none; }
.ttabs .act { height: 11px; margin: -1px 0 0 -1px; padding: 2px 6px; background: #fff; color: #1c1c1a; border: 1px solid #555; border-top: 0; border-left: 0; }

.status { height: 13px; flex: none; display: flex; align-items: center; background: #ece9d8; border-top: 1px solid #bcb8a4; }
.help { width: 183px; }
.def { width: 63px; padding-left: 3px; border-left: 1px solid #cbc7b4; }
.status i { width: 42.700px; height: 10px; border-left: 1px solid #cbc7b4; }
.status .w61 { width: 61px; }
.status .w44 { width: 44px; }
.status .w39 { width: 43px; }
.status svg { width: 14px; height: 9px; margin-left: 0; }
.kb { margin-left: 17px; }
.status .gripc { width: 8px; height: 8px; margin-left: auto; }
.task { height: 2px; flex: none; margin: 1px -2px 0 -3px; display: flex; }
.task i { width: 59px; background: #3d9a3a; }
.task u { flex: 1; background: #2f78dc; }
.task b { width: 69px; background: #18a4ee; }
</style>
